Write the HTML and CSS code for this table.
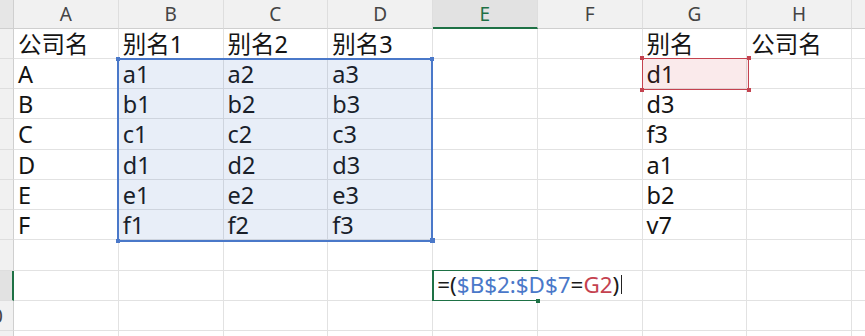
FILE: index.html
```html
<!DOCTYPE html>
<html lang="zh">
<head>
<meta charset="utf-8">
<title>Sheet</title>
<link rel="stylesheet" href="styles.css">
</head>
<body>
<div class="sheet">
  <div class="corner"></div>
  <div class="ch">A</div><div class="ch">B</div><div class="ch">C</div><div class="ch">D</div><div class="ch active">E</div><div class="ch">F</div><div class="ch">G</div><div class="ch">H</div><div class="ch"></div>

  <div class="rh">1</div><div class="c">公司名</div><div class="c">别名1</div><div class="c">别名2</div><div class="c">别名3</div><div class="c"></div><div class="c"></div><div class="c">别名</div><div class="c">公司名</div><div class="c"></div>
  <div class="rh">2</div><div class="c">A</div><div class="c">a1</div><div class="c">a2</div><div class="c">a3</div><div class="c"></div><div class="c"></div><div class="c">d1</div><div class="c"></div><div class="c"></div>
  <div class="rh">3</div><div class="c">B</div><div class="c">b1</div><div class="c">b2</div><div class="c">b3</div><div class="c"></div><div class="c"></div><div class="c">d3</div><div class="c"></div><div class="c"></div>
  <div class="rh">4</div><div class="c">C</div><div class="c">c1</div><div class="c">c2</div><div class="c">c3</div><div class="c"></div><div class="c"></div><div class="c">f3</div><div class="c"></div><div class="c"></div>
  <div class="rh">5</div><div class="c">D</div><div class="c">d1</div><div class="c">d2</div><div class="c">d3</div><div class="c"></div><div class="c"></div><div class="c">a1</div><div class="c"></div><div class="c"></div>
  <div class="rh">6</div><div class="c">E</div><div class="c">e1</div><div class="c">e2</div><div class="c">e3</div><div class="c"></div><div class="c"></div><div class="c">b2</div><div class="c"></div><div class="c"></div>
  <div class="rh">7</div><div class="c">F</div><div class="c">f1</div><div class="c">f2</div><div class="c">f3</div><div class="c"></div><div class="c"></div><div class="c">v7</div><div class="c"></div><div class="c"></div>
  <div class="rh">8</div><div class="c"></div><div class="c"></div><div class="c"></div><div class="c"></div><div class="c"></div><div class="c"></div><div class="c"></div><div class="c"></div><div class="c"></div>
  <div class="rh active">9</div><div class="c"></div><div class="c"></div><div class="c"></div><div class="c"></div><div class="c"></div><div class="c"></div><div class="c"></div><div class="c"></div><div class="c"></div>
  <div class="rh">10</div><div class="c"></div><div class="c"></div><div class="c"></div><div class="c"></div><div class="c"></div><div class="c"></div><div class="c"></div><div class="c"></div><div class="c"></div>
  <div class="rh">11</div><div class="c"></div><div class="c"></div><div class="c"></div><div class="c"></div><div class="c"></div><div class="c"></div><div class="c"></div><div class="c"></div><div class="c"></div>

  <div class="sel-blue">
    <span class="h h-tl"></span><span class="h h-tr"></span><span class="h h-bl"></span><span class="h h-br"></span>
  </div>
  <div class="sel-red">
    <span class="h h-tl"></span><span class="h h-tr"></span><span class="h h-bl"></span><span class="h h-br"></span>
  </div>
  <div class="editor">
    <span class="formula">=(<span class="ref-b">$B$2:$D$7</span>=<span class="ref-r">G2</span>)<span class="caret"></span></span>
    <span class="h h-br"></span>
  </div>
</div>
</body>
</html>
```

FILE: styles.css
```css
html, body {
  margin: 0;
  padding: 0;
  background: #fff;
  overflow: hidden;
}
body {
  width: 865px;
  height: 336px;
}
.sheet {
  position: relative;
  display: grid;
  grid-template-columns: 44px repeat(9, 104.75px);
  grid-template-rows: 28.6px repeat(11, 30.25px);
  margin-left: -30px;
  font-family: "Noto Sans", "Noto Sans CJK SC", sans-serif;
}
.corner {
  background: #e6e6e6;
  border-right: 1px solid #cfcfcf;
  border-bottom: 1px solid #cfcfcf;
  box-sizing: border-box;
}
.ch {
  box-sizing: border-box;
  background: #f1f1f1;
  border-right: 1px solid #dedede;
  border-bottom: 1px solid #cfcfcf;
  font-size: 19px;
  line-height: 26px;
  padding-top: 1px;
  text-align: center;
  color: #444;
}
.ch.active {
  background: #e2e2e2;
  color: #1e7145;
  border-bottom: 2px solid #1e7145;
}
.rh {
  box-sizing: border-box;
  background: #f1f1f1;
  border-right: 1px solid #cfcfcf;
  border-bottom: 1px solid #dedede;
  font-size: 20px;
  line-height: 30px;
  text-align: center;
  color: #444;
  white-space: nowrap;
}
.rh.active {
  background: #e2e2e2;
  border-right: 2px solid #1e7145;
}
.c {
  box-sizing: border-box;
  border-right: 1px solid #e2e2e2;
  border-bottom: 1px solid #e2e2e2;
  font-size: 23.5px;
  line-height: 29px;
  padding: 1px 0 0 4px;
  color: #141414;
  white-space: nowrap;
  overflow: hidden;
}

.sel-blue, .sel-red, .editor {
  position: absolute;
  box-sizing: border-box;
}
.sel-blue {
  left: 147.3px;
  top: 57.5px;
  width: 316px;
  height: 184px;
  border: 2px solid #4a78c9;
  background: rgba(68, 114, 196, 0.12);
}
.sel-red {
  left: 671.5px;
  top: 58.3px;
  width: 107px;
  height: 31.5px;
  border: 1.5px solid #c4424f;
  background: rgba(214, 60, 72, 0.11);
}
.h {
  position: absolute;
  width: 4px;
  height: 4px;
}
.sel-blue .h { background: #4a78c9; }
.sel-red .h { background: #c4424f; }
.h-tl { left: -3px; top: -3px; }
.h-tr { right: -3px; top: -3px; }
.h-bl { left: -3px; bottom: -3px; }
.h-br { right: -3px; bottom: -3px; }
.sel-blue .h-br { width: 5px; height: 5px; right: -3.5px; bottom: -3.5px; }

.editor {
  left: 462.3px;
  top: 269.6px;
  width: 105.5px;
  height: 31.5px;
  border-left: 2px solid #1e7145;
  border-top: 1.5px solid #1e7145;
  border-bottom: 1.5px solid #1e7145;
}
.editor .h {
  background: #1e7145;
  width: 4px;
  height: 4px;
  right: -2px;
  bottom: -3px;
}
.formula {
  display: inline-flex;
  align-items: center;
  height: 28.5px;
  padding: 0 2px 0 3px;
  background: #fff;
  font-size: 22.4px;
  line-height: 28px;
  color: #1a1a1a;
  white-space: nowrap;
}
.ref-b { color: #4a78c9; }
.ref-r { color: #c4424f; }
.caret {
  display: inline-block;
  width: 1px;
  height: 19px;
  margin-left: 2px;
  background: #222;
}
```
